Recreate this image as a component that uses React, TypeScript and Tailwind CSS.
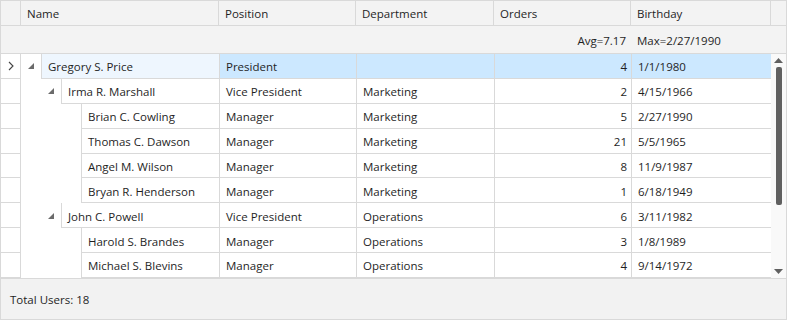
import React from 'react';

type Employee = {
    name: string;
    level: number;
    parent: boolean;
    position: string;
    department: string;
    orders: number;
    birthday: string;
};

const employees: Employee[] = [
    { name: 'Gregory S. Price', level: 0, parent: true, position: 'President', department: '', orders: 4, birthday: '1/1/1980' },
    { name: 'Irma R. Marshall', level: 1, parent: true, position: 'Vice President', department: 'Marketing', orders: 2, birthday: '4/15/1966' },
    { name: 'Brian C. Cowling', level: 2, parent: false, position: 'Manager', department: 'Marketing', orders: 5, birthday: '2/27/1990' },
    { name: 'Thomas C. Dawson', level: 2, parent: false, position: 'Manager', department: 'Marketing', orders: 21, birthday: '5/5/1965' },
    { name: 'Angel M. Wilson', level: 2, parent: false, position: 'Manager', department: 'Marketing', orders: 8, birthday: '11/9/1987' },
    { name: 'Bryan R. Henderson', level: 2, parent: false, position: 'Manager', department: 'Marketing', orders: 1, birthday: '6/18/1949' },
    { name: 'John C. Powell', level: 1, parent: true, position: 'Vice President', department: 'Operations', orders: 6, birthday: '3/11/1982' },
    { name: 'Harold S. Brandes', level: 2, parent: false, position: 'Manager', department: 'Operations', orders: 3, birthday: '1/8/1989' },
    { name: 'Michael S. Blevins', level: 2, parent: false, position: 'Manager', department: 'Operations', orders: 4, birthday: '9/14/1972' },
];

// indent widths per tree level, written out so tailwind picks them up
const indentWidth = [ 'w-[20px]', 'w-[40px]', 'w-[60px]' ];

const ExpandedGlyph = () => (
    <svg width="6" height="6" viewBox="0 0 6 6" className="block">
        <polygon points="6,0 6,6 0,6" fill="#6b6b6b"/>
    </svg>
);

const HeaderCell = ( { title, width }: { title: string; width: string } ) => (
    <div className={ `${ width } shrink-0 h-full border-r border-[#d9d9d9] pl-[6px] pt-[2px] flex items-center` }>
        { title }
    </div>
);

const Row = ( { item, selected }: { item: Employee; selected: boolean } ) => {
    const cellBg = selected ? 'bg-[#cce8ff]' : 'bg-white';

    return (
        <div className="flex h-[25px]">
            <div className="w-[20px] shrink-0 border-r border-b border-[#d9d9d9] flex items-center justify-center">
                { selected && (
                    <svg width="6" height="10" viewBox="0 0 6 10">
                        <polyline points="1,1 5,5 1,9" fill="none" stroke="#444" strokeWidth="1.1"/>
                    </svg>
                ) }
            </div>

            <div className={ `${ indentWidth[ item.level ] } shrink-0 flex items-center justify-end pr-[7px]` }>
                { item.parent && <ExpandedGlyph/> }
            </div>

            <div
                className={ `flex-1 border-l border-b border-r border-[#d9d9d9] pl-[6px] pt-[2px] flex items-center ${ selected ? 'bg-[#eef6fe]' : 'bg-white' }` }>
                { item.name }
            </div>
            <div className={ `w-[137px] shrink-0 border-b border-r border-[#d9d9d9] pl-[6px] pt-[2px] flex items-center ${ cellBg }` }>
                { item.position }
            </div>
            <div className={ `w-[138px] shrink-0 border-b border-r border-[#d9d9d9] pl-[6px] pt-[2px] flex items-center ${ cellBg }` }>
                { item.department }
            </div>
            <div className={ `w-[137px] shrink-0 border-b border-r border-[#d9d9d9] pr-[4px] pt-[2px] flex items-center justify-end ${ cellBg }` }>
                { item.orders }
            </div>
            <div className={ `w-[139px] shrink-0 border-b border-[#d9d9d9] pl-[6px] pt-[2px] flex items-center ${ cellBg }` }>
                { item.birthday }
            </div>
        </div>
    );
};

export default function App() {
    return (
        <div
            className="w-[787px] h-[320px] border border-[#d9d9d9] bg-white flex flex-col text-[11.5px] text-[#1f1f1f] font-['Segoe_UI','Open_Sans',sans-serif] overflow-hidden">

            {/* column headers */ }
            <div className="flex h-[25px] shrink-0 bg-[#f3f3f3] border-b border-[#d9d9d9]">
                <div className="w-[20px] shrink-0 border-r border-[#d9d9d9]"/>
                <HeaderCell title="Name" width="w-[198px]"/>
                <HeaderCell title="Position" width="w-[137px]"/>
                <HeaderCell title="Department" width="w-[138px]"/>
                <HeaderCell title="Orders" width="w-[137px]"/>
                <HeaderCell title="Birthday" width="w-[140px]"/>
                <div className="flex-1"/>
            </div>

            {/* totals */ }
            <div className="flex h-[28px] shrink-0 bg-[#f3f3f3] border-b border-[#d9d9d9] pt-[2px]">
                <div className="w-[493px] shrink-0"/>
                <div className="w-[137px] shrink-0 pr-[5px] flex items-center justify-end">Avg=7.17</div>
                <div className="w-[140px] shrink-0 pl-[6px] flex items-center">Max=2/27/1990</div>
            </div>

            {/* rows + scrollbar */ }
            <div className="flex h-[224px] shrink-0 overflow-hidden">
                <div className="flex-1 flex flex-col">
                    { employees.map( ( item, i ) => (
                        <Row key={ item.name } item={ item } selected={ i === 0 }/>
                    ) ) }
                </div>
                <div className="w-[15px] shrink-0 bg-[#f9f9f9] flex flex-col items-center pt-[4px] pb-[4px]">
                    <svg width="9" height="5" viewBox="0 0 9 5">
                        <polygon points="4.5,0 9,5 0,5" fill="#606060"/>
                    </svg>
                    <div className="w-[6px] h-[138px] mt-[4px] rounded-[2px] bg-[#606060]"/>
                    <div className="flex-1"/>
                    <svg width="9" height="5" viewBox="0 0 9 5">
                        <polygon points="0,0 9,0 4.5,5" fill="#606060"/>
                    </svg>
                </div>
            </div>

            {/* footer */ }
            <div className="flex-1 bg-[#f2f2f2] border-t border-[#d9d9d9] pl-[9px] pt-[2px] flex items-center">
                Total Users: 18
            </div>
        </div>
    );
}
